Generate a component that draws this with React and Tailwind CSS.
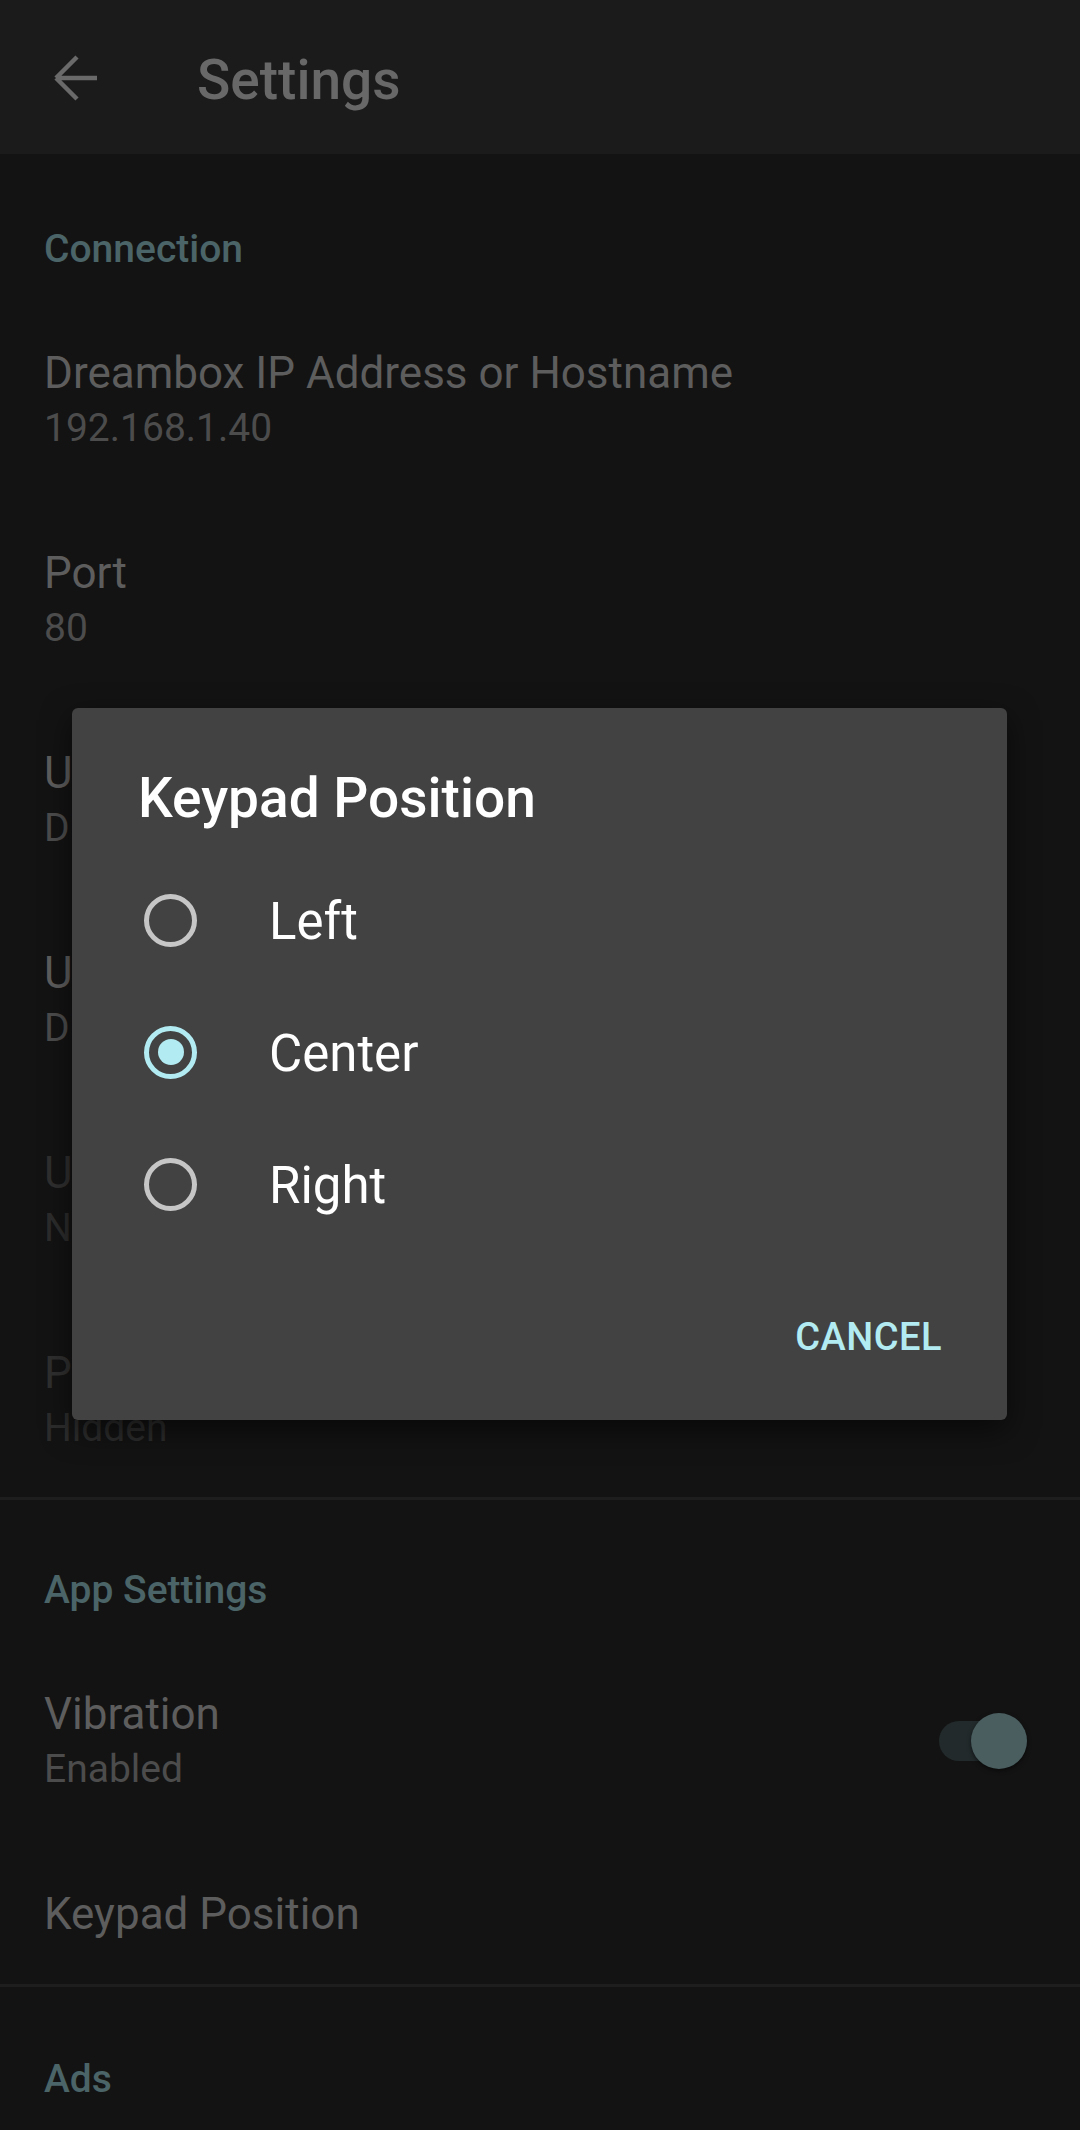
import React from 'react';

const CONNECTION = [
  { title: 'Dreambox IP Address or Hostname', summary: '192.168.1.40' },
  { title: 'Port', summary: '80' },
  { title: 'Use HTTPS', summary: 'Disabled' },
  { title: 'Use Authentication', summary: 'Disabled' },
  { title: 'Username', summary: 'Not set', disabled: true },
  { title: 'Password', summary: 'Hidden', disabled: true },
];

const OPTIONS = ['Left', 'Center', 'Right'];

function BackArrow() {
  return (
    <svg width="48" height="48" viewBox="0 0 48 48" className="block">
      <path
        d="M46 24H6M5 24L26 3M5 24L26 45"
        fill="none"
        stroke="#6a6a6a"
        strokeWidth="4.5"
      />
    </svg>
  );
}

function Category({ label, top }) {
  return (
    <div className={`px-[44px] ${top} pb-[23px]`}>
      <div className="text-[39px] leading-[50px] font-medium text-[#4b6467]">{label}</div>
    </div>
  );
}

function Pref({ title, summary, disabled, children }) {
  return (
    <div className="flex items-center pl-[44px] pr-[53px] pt-[48px] pb-[42px]">
      <div className="flex-1">
        <div className={`text-[44px] leading-[56px] ${disabled ? 'text-[#2f2f2f]' : 'text-[#5d5d5d]'}`}>
          {title}
        </div>
        {summary && (
          <div className={`text-[39px] leading-[54px] ${disabled ? 'text-[#2c2c2c]' : 'text-[#4c4c4c]'}`}>
            {summary}
          </div>
        )}
      </div>
      {children}
    </div>
  );
}

function Toggle() {
  return (
    <div className="relative w-[88px] h-[56px]">
      <div className="absolute left-0 top-[8px] w-[76px] h-[40px] rounded-full bg-[#222a2b]" />
      <div className="absolute right-0 top-0 w-[56px] h-[56px] rounded-full bg-[#4a5e60] shadow-[0_2px_4px_rgba(0,0,0,0.5)]" />
    </div>
  );
}

function Radio({ checked }) {
  return (
    <div
      className={`w-[53px] h-[53px] rounded-full border-[5px] flex items-center justify-center ${
        checked ? 'border-[#b2ebf2]' : 'border-[#c6c6c6]'
      }`}
    >
      {checked && <div className="w-[26px] h-[26px] rounded-full bg-[#b2ebf2]" />}
    </div>
  );
}

export default function App() {
  return (
    <div className="relative w-[1080px] h-[2130px] overflow-hidden bg-[#131313] font-[Roboto,sans-serif]">
      {/* app bar */}
      <div className="h-[154px] bg-[#1b1b1b] flex items-center">
        <div className="ml-[51px] mt-[2px]">
          <BackArrow />
        </div>
        <div className="ml-[98px] text-[55px] leading-[64px] font-medium text-[#686868] mt-[6px]">Settings</div>
      </div>

      <Category label="Connection" top="pt-[70px]" />
      {CONNECTION.map((p) => (
        <Pref key={p.title} {...p} />
      ))}
      <div className="h-[3px] bg-[#1e1e1e]" />

      <Category label="App Settings" top="pt-[65px]" />
      <Pref title="Vibration" summary="Enabled">
        <Toggle />
      </Pref>
      <Pref title="Keypad Position" />
      <div className="h-[3px] bg-[#1e1e1e]" />
      <Category label="Ads" top="pt-[67px]" />

      {/* dialog */}
      <div className="absolute left-[72px] top-[708px] w-[935px] h-[712px] rounded-[6px] bg-[#424242] shadow-[0_10px_30px_rgba(0,0,0,0.55)] flex flex-col">
        <div className="pl-[66px] pt-[58px] text-[55px] leading-[64px] font-medium text-white">Keypad Position</div>
        <div className="mt-[24px] flex flex-col">
          {OPTIONS.map((o) => (
            <div key={o} className="h-[132px] flex items-center pl-[72px]">
              <Radio checked={o === 'Center'} />
              <div className="ml-[72px] text-[51px] leading-[60px] text-white mt-[4px]">{o}</div>
            </div>
          ))}
        </div>
        <div className="flex justify-end pr-[65px] pt-[63px]">
          <div className="text-[38px] leading-[48px] font-medium tracking-[0.5px] text-[#b2ebf2]">CANCEL</div>
        </div>
      </div>
    </div>
  );
}
